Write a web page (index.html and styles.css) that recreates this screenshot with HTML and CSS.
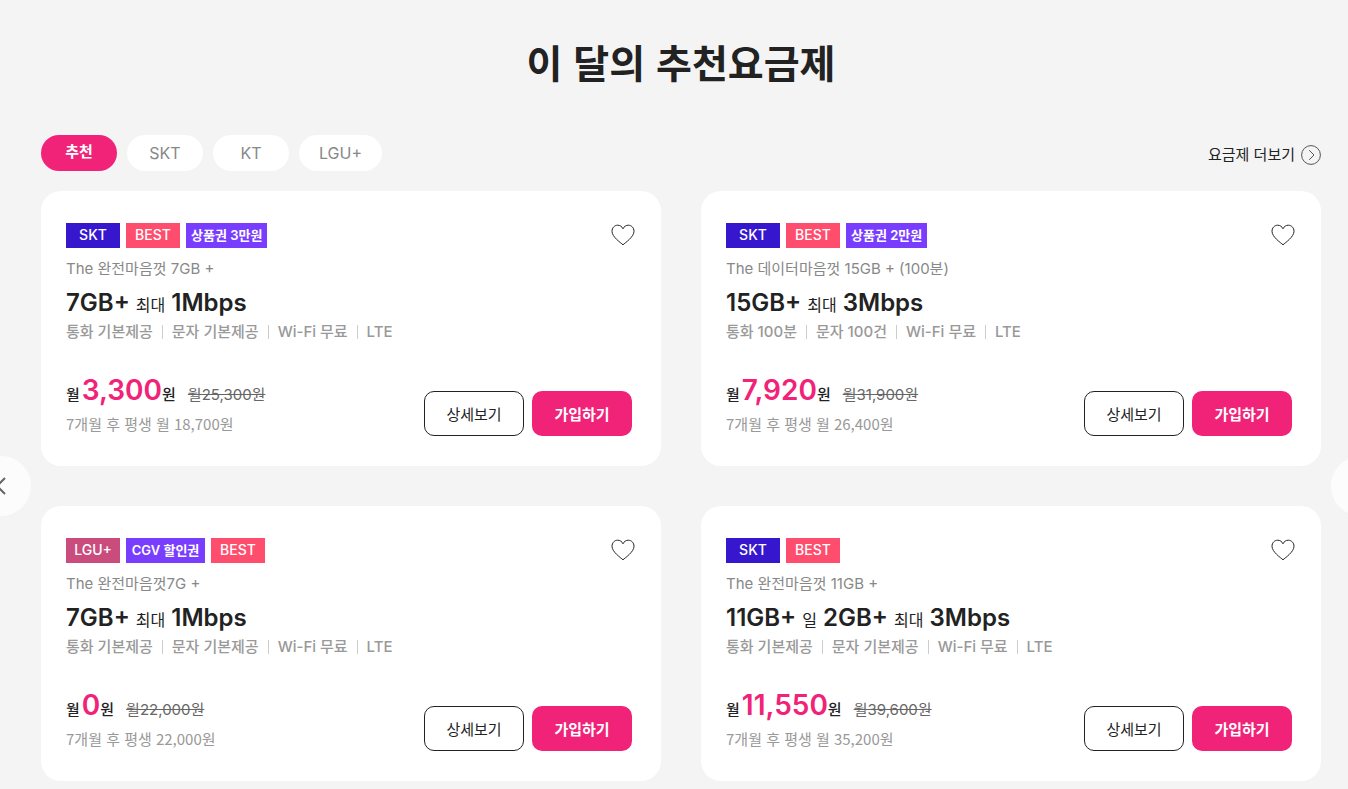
FILE: index.html
```html
<!DOCTYPE html>
<html lang="ko">
<head>
<meta charset="utf-8">
<meta name="viewport" content="width=device-width, initial-scale=1">
<title>이 달의 추천요금제</title>
<link rel="stylesheet" href="styles.css">
</head>
<body>
<svg class="defs" width="0" height="0" aria-hidden="true">
  <symbol id="heart" viewBox="0 0 24 22"><path d="M12 20.8C9.7 18.7 1 12.9 1 7.3C1 3.7 3.6 1.2 6.7 1.2C9 1.2 11 2.5 12 4.8C13 2.5 15 1.2 17.3 1.2C20.4 1.2 23 3.7 23 7.3C23 12.9 14.3 18.7 12 20.8Z"/></symbol>
</svg>
<main class="recommend">
  <h1 class="heading">이 달의 추천요금제</h1>
  <div class="toolbar">
    <div class="tabs">
      <button class="tab tab-active" type="button">추천</button>
      <button class="tab" type="button">SKT</button>
      <button class="tab" type="button">KT</button>
      <button class="tab" type="button">LGU+</button>
    </div>
    <a class="more" href="#">요금제 더보기
      <svg class="more-icon" viewBox="0 0 20 20" aria-hidden="true"><circle cx="10" cy="10" r="9.4"/><path d="M8.2 5.2L13 10L8.2 14.8"/></svg>
    </a>
  </div>
  <div class="slider">
    <div class="cards">
      <article class="card">
        <div class="card-head">
          <div class="tags"><span class="tag tag-skt">SKT</span><span class="tag tag-best">BEST</span><span class="tag tag-gift">상품권 3만원</span></div>
          <button class="like" type="button" aria-label="찜하기"><svg class="like-icon" aria-hidden="true"><use href="#heart"/></svg></button>
        </div>
        <p class="name">The 완전마음껏 7GB +</p>
        <h2 class="data">7GB+ <small class="unit">최대</small> 1Mbps</h2>
        <ul class="specs"><li class="spec">통화 기본제공</li><li class="spec">문자 기본제공</li><li class="spec">Wi-Fi 무료</li><li class="spec">LTE</li></ul>
        <div class="card-foot">
          <div>
            <p class="price">월<strong class="amount">3,300</strong>원<del class="before">월25,300원</del></p>
            <p class="after">7개월 후 평생 월 18,700원</p>
          </div>
          <div class="actions"><button class="btn btn-line" type="button">상세보기</button><button class="btn btn-fill" type="button">가입하기</button></div>
        </div>
      </article>
      <article class="card">
        <div class="card-head">
          <div class="tags"><span class="tag tag-skt">SKT</span><span class="tag tag-best">BEST</span><span class="tag tag-gift">상품권 2만원</span></div>
          <button class="like" type="button" aria-label="찜하기"><svg class="like-icon" aria-hidden="true"><use href="#heart"/></svg></button>
        </div>
        <p class="name">The 데이터마음껏 15GB + (100분)</p>
        <h2 class="data">15GB+ <small class="unit">최대</small> 3Mbps</h2>
        <ul class="specs"><li class="spec">통화 100분</li><li class="spec">문자 100건</li><li class="spec">Wi-Fi 무료</li><li class="spec">LTE</li></ul>
        <div class="card-foot">
          <div>
            <p class="price">월<strong class="amount">7,920</strong>원<del class="before">월31,900원</del></p>
            <p class="after">7개월 후 평생 월 26,400원</p>
          </div>
          <div class="actions"><button class="btn btn-line" type="button">상세보기</button><button class="btn btn-fill" type="button">가입하기</button></div>
        </div>
      </article>
      <article class="card">
        <div class="card-head">
          <div class="tags"><span class="tag tag-lgu">LGU+</span><span class="tag tag-gift">CGV 할인권</span><span class="tag tag-best">BEST</span></div>
          <button class="like" type="button" aria-label="찜하기"><svg class="like-icon" aria-hidden="true"><use href="#heart"/></svg></button>
        </div>
        <p class="name">The 완전마음껏7G +</p>
        <h2 class="data">7GB+ <small class="unit">최대</small> 1Mbps</h2>
        <ul class="specs"><li class="spec">통화 기본제공</li><li class="spec">문자 기본제공</li><li class="spec">Wi-Fi 무료</li><li class="spec">LTE</li></ul>
        <div class="card-foot">
          <div>
            <p class="price">월<strong class="amount">0</strong>원<del class="before">월22,000원</del></p>
            <p class="after">7개월 후 평생 22,000원</p>
          </div>
          <div class="actions"><button class="btn btn-line" type="button">상세보기</button><button class="btn btn-fill" type="button">가입하기</button></div>
        </div>
      </article>
      <article class="card">
        <div class="card-head">
          <div class="tags"><span class="tag tag-skt">SKT</span><span class="tag tag-best">BEST</span></div>
          <button class="like" type="button" aria-label="찜하기"><svg class="like-icon" aria-hidden="true"><use href="#heart"/></svg></button>
        </div>
        <p class="name">The 완전마음껏 11GB +</p>
        <h2 class="data">11GB+ <small class="unit">일</small> 2GB+ <small class="unit">최대</small> 3Mbps</h2>
        <ul class="specs"><li class="spec">통화 기본제공</li><li class="spec">문자 기본제공</li><li class="spec">Wi-Fi 무료</li><li class="spec">LTE</li></ul>
        <div class="card-foot">
          <div>
            <p class="price">월<strong class="amount">11,550</strong>원<del class="before">월39,600원</del></p>
            <p class="after">7개월 후 평생 월 35,200원</p>
          </div>
          <div class="actions"><button class="btn btn-line" type="button">상세보기</button><button class="btn btn-fill" type="button">가입하기</button></div>
        </div>
      </article>
    </div>
    <button class="arrow arrow-prev" type="button" aria-label="이전"><svg class="arrow-icon" viewBox="0 0 20 20" aria-hidden="true"><path d="M14 2L6 10L14 18"/></svg></button>
    <button class="arrow arrow-next" type="button" aria-label="다음"><svg class="arrow-icon" viewBox="0 0 20 20" aria-hidden="true"><path d="M6 2L14 10L6 18"/></svg></button>
  </div>
</main>
</body>
</html>
```
FILE: styles.css
```css
* { box-sizing: border-box; }
body {
  margin: 0;
  background: #f4f4f4;
  color: #222;
  font-family: Inter, "Noto Sans CJK KR", sans-serif;
  font-size: 15px;
}
h1, h2, p, ul { margin: 0; padding: 0; }
button { font: inherit; color: inherit; border: 0; padding: 0; cursor: pointer; }
.defs { position: absolute; }

.recommend { padding: 32px 27px 8px 41px; overflow: hidden; }
.heading, .after { font-family: "Noto Sans CJK KR", sans-serif; }
.heading { font-size: 39px; line-height: 58px; font-weight: 600; text-align: center; margin-bottom: 45px; }

.toolbar { display: flex; justify-content: space-between; align-items: center; margin-bottom: 20px; }
.tabs { display: flex; gap: 10px; }
.tab { min-width: 76px; height: 36px; padding: 0 20px; border-radius: 18px; background: #fff; color: #888; font-size: 16px; }
.tab-active { background: #f02378; color: #fff; font-size: 15px; line-height: 34px; padding-bottom: 2px; font-weight: 700; }
.more { display: flex; align-items: center; gap: 6px; padding-top: 4px; color: #222; text-decoration: none; line-height: 20px; }
.more-icon { width: 20px; height: 20px; fill: none; stroke: #555; stroke-width: 1; }

.slider { position: relative; }
.cards { display: grid; grid-template-columns: 1fr 1fr; gap: 40px; }
.card { background: #fff; border-radius: 20px; padding: 32px 25px 30px; }
.card-head { display: flex; justify-content: space-between; margin-bottom: 7px; }
.tags { display: flex; gap: 6px; }
.tag { min-width: 54px; height: 25px; padding: 0 5px; line-height: 24px; text-align: center; color: #fff; font-size: 14px; font-weight: 500; white-space: nowrap; }
.tag-skt { background: #3617ce; }
.tag-best { background: #ff4d6e; }
.tag-lgu { background: #c94c7c; }
.tag-gift { background: #793dff; font-size: 13px; font-weight: 600; min-width: 79px; }
.like { display: flex; align-items: center; justify-content: center; width: 26px; height: 24px; background: none; }
.like-icon { width: 24px; height: 22px; fill: none; stroke: #222; stroke-width: 1; }

.name { height: 28px; color: #888; line-height: 28px; margin-bottom: 2px; }
.data { min-height: 36px; font-size: 24px; line-height: 36px; font-weight: 600; }
.unit { font-size: 16px; line-height: 20px; font-weight: 400; }
.specs { display: flex; list-style: none; color: #999; line-height: 20px; font-weight: 500; margin-bottom: 28px; }
.spec { display: flex; align-items: center; height: 22px; }
.spec + .spec::before { content: ""; width: 1px; height: 14px; margin: 0 9px; background: #ccc; }

.card-foot { display: flex; justify-content: space-between; align-items: flex-end; }
.price { height: 41px; line-height: 38px; font-weight: 500; }
.amount { margin-left: 2px; color: #f02378; font-size: 28px; font-weight: 600; }
.before { margin-left: 12px; color: #666; font-weight: 400; }
.after { color: #999; line-height: 24px; }
.actions { display: flex; gap: 8px; margin-right: 4px; }
.btn { width: 100px; height: 45px; border-radius: 10px; }
.btn-line { border: 1px solid #222; background: #fff; }
.btn-fill { background: #f02378; color: #fff; font-weight: 600; }

.arrow { position: absolute; top: 50%; margin-top: -30px; display: flex; align-items: center; justify-content: center; width: 60px; height: 60px; border-radius: 50%; background: #fcfcfc; }
.arrow-prev { left: -70px; }
.arrow-next { right: -70px; }
.arrow-icon { width: 20px; height: 20px; fill: none; stroke: #666; stroke-width: 2; }

@media (max-width: 1000px) {
  .cards { grid-template-columns: 1fr; }
}
```
